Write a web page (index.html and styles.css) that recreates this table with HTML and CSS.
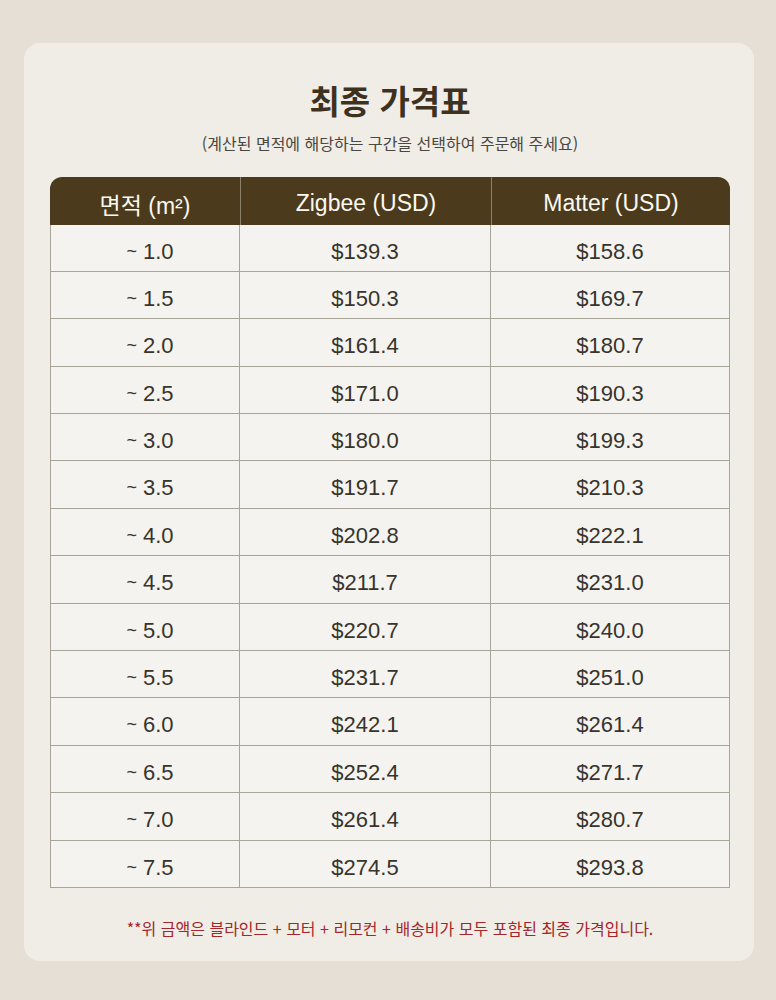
FILE: index.html
```html
<!DOCTYPE html>
<html lang="ko">
<head>
<meta charset="utf-8">
<link rel="stylesheet" href="styles.css">
</head>
<body>
<div class="card">
  <h1 class="title">최종 가격표</h1>
  <p class="subtitle">(계산된 면적에 해당하는 구간을 선택하여 주문해 주세요)</p>
  <table class="price">
    <thead>
      <tr><th class="c1">면적 (m²)</th><th class="c2">Zigbee (USD)</th><th class="c3">Matter (USD)</th></tr>
    </thead>
    <tbody>
      <tr><td><span class="t">~</span> 1.0</td><td>$139.3</td><td>$158.6</td></tr>
      <tr><td><span class="t">~</span> 1.5</td><td>$150.3</td><td>$169.7</td></tr>
      <tr><td><span class="t">~</span> 2.0</td><td>$161.4</td><td>$180.7</td></tr>
      <tr><td><span class="t">~</span> 2.5</td><td>$171.0</td><td>$190.3</td></tr>
      <tr><td><span class="t">~</span> 3.0</td><td>$180.0</td><td>$199.3</td></tr>
      <tr><td><span class="t">~</span> 3.5</td><td>$191.7</td><td>$210.3</td></tr>
      <tr><td><span class="t">~</span> 4.0</td><td>$202.8</td><td>$222.1</td></tr>
      <tr><td><span class="t">~</span> 4.5</td><td>$211.7</td><td>$231.0</td></tr>
      <tr><td><span class="t">~</span> 5.0</td><td>$220.7</td><td>$240.0</td></tr>
      <tr><td><span class="t">~</span> 5.5</td><td>$231.7</td><td>$251.0</td></tr>
      <tr><td><span class="t">~</span> 6.0</td><td>$242.1</td><td>$261.4</td></tr>
      <tr><td><span class="t">~</span> 6.5</td><td>$252.4</td><td>$271.7</td></tr>
      <tr><td><span class="t">~</span> 7.0</td><td>$261.4</td><td>$280.7</td></tr>
      <tr><td><span class="t">~</span> 7.5</td><td>$274.5</td><td>$293.8</td></tr>
    </tbody>
  </table>
  <p class="note">**위 금액은 블라인드 + 모터 + 리모컨 + 배송비가 모두 포함된 최종 가격입니다.</p>
</div>
</body>
</html>
```
FILE: styles.css
```css
html, body {
  margin: 0;
  padding: 0;
  background: #e5dfd5;
}
body {
  font-family: "Liberation Sans", "Noto Sans CJK KR", sans-serif;
  padding: 43px 22px 38px 24px;
}
.card {
  background: #f0ede7;
  border-radius: 16px;
  padding: 35px 24px 22px 26px;
}
.title {
  margin: 0;
  text-align: center;
  font-size: 33px;
  line-height: 44px;
  font-weight: 700;
  color: #3e321f;
  font-family: "Noto Sans CJK KR", sans-serif;
}
.subtitle {
  margin: 10px 0 0;
  text-align: center;
  font-size: 16px;
  line-height: 22px;
  color: #4a4640;
  font-family: "Noto Sans CJK KR", sans-serif;
}
.price {
  margin-top: 23px;
  width: 680px;
  border-collapse: separate;
  border-spacing: 0;
  table-layout: fixed;
}
.price th {
  background: #4b3b1c;
  color: #fbf8f2;
  font-weight: 400;
  font-size: 23px;
  height: 47.5px;
  padding: 6px 0 0;
  box-sizing: border-box;
  text-align: center;
  border-left: 1px solid #8c8068;
}
.price th.c1 { width: 190px; border-left: none; border-top-left-radius: 12px; }
.price th.c2 { width: 251px; }
.price th.c3 { border-top-right-radius: 12px; }
.price td {
  background: #f5f3ef;
  color: #37342c;
  font-size: 22px;
  line-height: 26px;
  padding: 14px 0 0;
  vertical-align: top;
  text-align: center;
  border-bottom: 1px solid #a8a497;
  border-right: 1px solid #a8a497;
  box-sizing: border-box;
  height: 47.4px;
}
.price td:first-child {
  border-left: 1px solid #a8a497;
  padding-left: 10px;
}
.price td .t {
  font-size: 18px;
  line-height: 1;
  vertical-align: 2px;
}
.note {
  margin: 29px 0 0;
  text-align: center;
  font-size: 16px;
  line-height: 22px;
  color: #a3262a;
  font-family: "Noto Sans CJK KR", sans-serif;
}
```
